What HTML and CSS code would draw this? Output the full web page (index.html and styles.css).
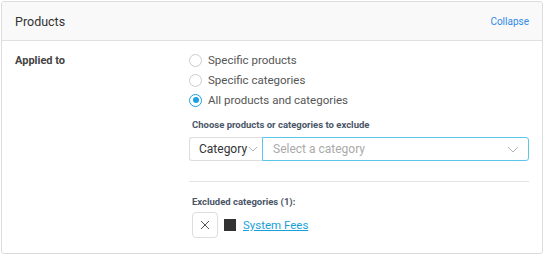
FILE: index.html
```html
<!DOCTYPE html>
<html lang="en">
<head>
    <meta charset="UTF-8">
    <title>Products</title>
    <link rel="stylesheet" href="styles.css">
</head>
<body>
    <div class="card">
        <div class="card-head">
            <span class="title">Products</span>
            <a class="collapse" href="#">Collapse</a>
        </div>
        <div class="card-body">
            <div class="label">Applied to</div>
            <div class="options">
                <label class="radio"><span class="dot"></span>Specific products</label>
                <label class="radio"><span class="dot"></span>Specific categories</label>
                <label class="radio"><span class="dot on"></span>All products and categories</label>

                <div class="sub">Choose products or categories to exclude</div>
                <div class="pick">
                    <div class="type">Category<svg class="chev" width="10" height="6" viewBox="0 0 10 6"><path d="M1 1l4 4 4-4" fill="none" stroke="#aaa" stroke-width="0.9"/></svg></div>
                    <div class="search">
                        <span>Select a category</span>
                        <svg class="chev" width="12" height="7" viewBox="0 0 12 7"><path d="M1 1l5 5 5-5" fill="none" stroke="#aaa" stroke-width="0.9"/></svg>
                    </div>
                </div>
                <hr>
                <div class="sub">Excluded categories (1):</div>
                <div class="excluded">
                    <button class="remove"><svg width="10" height="10" viewBox="0 0 10 10"><path d="M1 1l8 8M9 1l-8 8" stroke="#555" stroke-width="1"/></svg></button>
                    <span class="swatch"></span>
                    <a class="item" href="#">System Fees</a>
                </div>
            </div>
        </div>
    </div>
</body>
</html>
```

FILE: styles.css
```css
body {
    margin: 0;
    padding: 1px;
    font-family: Roboto, 'Liberation Sans', sans-serif;
    color: #333;
    background: #fff;
}
.card {
    width: 540px;
    height: 251px;
    border: 1px solid #dcdcdc;
    border-radius: 3px;
    overflow: hidden;
}
.card-head {
    height: 38px;
    display: flex;
    align-items: center;
    justify-content: space-between;
    padding: 0 13px 0 13px;
    background: #f9f9f9;
    border-bottom: 1px solid #e0e0e0;
}
.title {
    font-size: 12.5px;
    color: #333;
}
.collapse {
    font-size: 10px;
    color: #2f8ae8;
    text-decoration: none;
}
.card-body {
    display: flex;
    padding: 10px 13px 0 13px;
}
.label {
    width: 174px;
    font-size: 11px;
    font-weight: bold;
    color: #444;
    line-height: 20px;
}
.options {
    flex: 1;
    margin-top: -1px;
}
.radio {
    display: flex;
    align-items: center;
    height: 20px;
    font-size: 11.5px;
    color: #555;
}
.dot {
    width: 11px;
    height: 11px;
    border: 1px solid #ccc;
    border-radius: 50%;
    margin-right: 6px;
    box-sizing: content-box;
    position: relative;
}
.dot.on {
    border-color: #1ba1e2;
}
.dot.on::after {
    content: '';
    position: absolute;
    left: 2.5px;
    top: 2.5px;
    width: 6px;
    height: 6px;
    border-radius: 50%;
    background: #1ba1e2;
}
.sub {
    font-size: 9.5px;
    font-weight: bold;
    color: #4a5666;
    line-height: 20px;
    padding-left: 3px;
}
.options > .sub:first-of-type {
    margin-top: 5px;
}
.pick {
    display: flex;
    height: 24px;
    margin-top: 2px;
}
.type {
    width: 73px;
    display: flex;
    align-items: center;
    padding-left: 9px;
    font-size: 12px;
    color: #333;
    border: 1px solid #ddd;
    border-right: none;
    border-radius: 3px 0 0 3px;
    box-sizing: border-box;
}
.type .chev {
    margin-left: 1px;
}
.search {
    flex: 1;
    display: flex;
    align-items: center;
    justify-content: space-between;
    padding: 0 9px 0 10px;
    border: 1px solid #5bc6e8;
    border-radius: 0 3px 3px 0;
    font-size: 12px;
    color: #aaa;
}
hr {
    border: none;
    border-top: 1px solid #e4e4e4;
    margin: 20px 0 10px 0;
}
.excluded {
    display: flex;
    align-items: center;
    padding-left: 3px;
}
.remove {
    width: 26px;
    height: 26px;
    display: flex;
    align-items: center;
    justify-content: center;
    padding: 0;
    background: #fff;
    border: 1px solid #ddd;
    border-radius: 4px;
}
.swatch {
    width: 12px;
    height: 12px;
    background: #333;
    margin: 0 7px 0 6px;
}
.item {
    font-size: 11.5px;
    color: #1a9fd9;
}
```
